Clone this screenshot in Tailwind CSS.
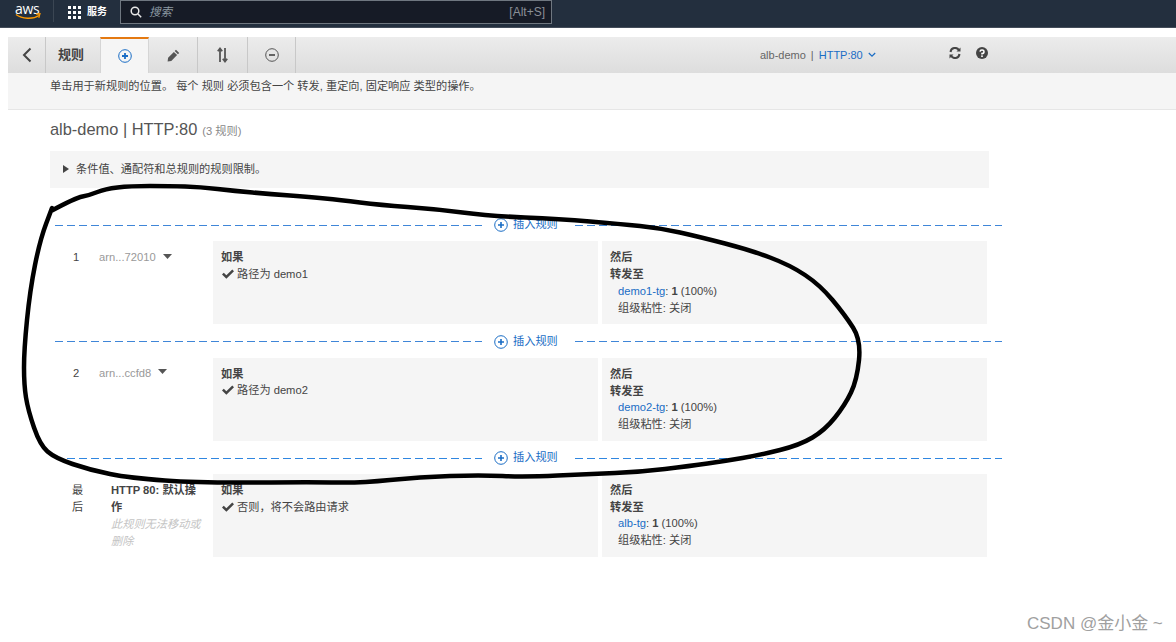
<!DOCTYPE html>
<html lang="en">
<head>
  <meta charset="UTF-8">
  <title>alb-demo 规则</title>
  <script src="https://cdn.jsdelivr.net/npm/@tailwindcss/browser@4"></script>
</head>
<body class="relative w-[1176px] h-[642px] overflow-hidden bg-white text-[#444] text-[11.2px] font-['Liberation_Sans','Noto_Sans_CJK_SC',sans-serif]">

  <!-- top nav -->
  <header class="h-[28px] bg-[#232f3e] border-b border-[#444d5a] flex items-start">
    <div class="w-[53px] h-[24px] pl-[15px] pt-px relative">
      <span class="block text-white text-[14px] leading-[15px] tracking-[-0.3px] font-['Open_Sans',sans-serif]">aws</span>
      <svg class="absolute left-[15px] top-[13px]" width="26" height="8" viewBox="0 0 26 8"><path d="M1 1.5C7 6 18 6.5 24 2.5" fill="none" stroke="#f90" stroke-width="1.5"/><path d="M21 1.2l4-.4-1.2 4" fill="none" stroke="#f90" stroke-width="1.2"/></svg>
    </div>
    <div class="w-px h-[22px] bg-[#3b4653]"></div>
    <svg class="ml-[14px] mt-[6px]" width="13" height="13" viewBox="0 0 13 13" fill="#fff">
      <rect x="0" y="0" width="3" height="3"/><rect x="5" y="0" width="3" height="3"/><rect x="10" y="0" width="3" height="3"/>
      <rect x="0" y="5" width="3" height="3"/><rect x="5" y="5" width="3" height="3"/><rect x="10" y="5" width="3" height="3"/>
      <rect x="0" y="10" width="3" height="3"/><rect x="5" y="10" width="3" height="3"/><rect x="10" y="10" width="3" height="3"/>
    </svg>
    <span class="ml-[6px] mt-[4px] w-[33px] text-white text-[10px] font-bold leading-[15px]">服务</span>
    <div class="w-[432px] h-[24px] bg-[#161b26] border border-[#6f7780] flex items-center pl-[9px] pr-[6px]">
      <svg width="12" height="12" viewBox="0 0 12 12" fill="none" stroke="#e8e8e8" stroke-width="1.5"><circle cx="5" cy="5" r="3.8"/><path d="M8 8l3.2 3.2"/></svg>
      <span class="ml-[7px] pt-px italic text-[11.5px] text-[#8d9aa3]">搜索</span>
      <span class="ml-auto text-[12px] text-[#8a8f96]">[Alt+S]</span>
    </div>
  </header>

  <!-- toolbar -->
  <div class="mt-[9px] ml-[8px] h-[36px] bg-gradient-to-b from-[#ececec] to-[#dddddd] flex items-stretch">
    <button class="w-[38px] flex items-center justify-center border-r border-[#c8c8c8]">
      <svg width="10" height="16" viewBox="0 0 10 16" fill="none" stroke="#444" stroke-width="2"><path d="M8.5 1.5L2 8l6.5 6.5"/></svg>
    </button>
    <div class="w-[54px] flex items-center pl-[12px] text-[13px] font-bold text-[#444]">规则</div>
    <button class="w-[49px] flex items-center justify-center bg-[#f5f5f5] border-t-2 border-[#e47911] border-x border-x-[#d5d5d5]">
      <svg width="14" height="14" viewBox="0 0 14 14" fill="none" stroke="#1a6dc5"><circle cx="7" cy="7" r="6.3"/><path d="M7 4v6M4 7h6" stroke-width="1.8"/></svg>
    </button>
    <button class="w-[49px] flex items-center justify-center border-r border-[#c8c8c8]">
      <svg width="13" height="13" viewBox="0 0 13 13" fill="#555"><path d="M9 .8l3.2 3.2-1.3 1.3-3.2-3.2zM6.9 2.9l3.2 3.2-5.8 5.8L.6 12.4l.5-3.7z"/></svg>
    </button>
    <button class="w-[50px] flex items-center justify-center border-r border-[#c8c8c8]">
      <svg width="11" height="16" viewBox="0 0 11 16" fill="none" stroke="#555" stroke-width="1.8"><path d="M3 15V2M.8 4.2L3 1.5l2.2 2.7M8 1v13M5.8 11.8L8 14.5l2.2-2.7"/></svg>
    </button>
    <button class="w-[48px] flex items-center justify-center border-r border-[#c8c8c8]">
      <svg width="14" height="14" viewBox="0 0 14 14" fill="none" stroke="#555"><circle cx="7" cy="7" r="6.3"/><path d="M4 7h6" stroke-width="1.8"/></svg>
    </button>
    <div class="ml-[464px] w-[121px] flex items-center text-[11px]">
      <span class="text-[#666]">alb-demo</span>
      <span class="mx-[5px] text-[#666]">|</span>
      <span class="text-[#1a6dc5]">HTTP:80</span>
      <svg class="ml-[5px]" width="8" height="6" viewBox="0 0 8 6" fill="none" stroke="#1a6dc5" stroke-width="1.2"><path d="M.8 1L4 4.2 7.2 1"/></svg>
    </div>
    <svg class="ml-[68px] mt-[10px]" width="12" height="12" viewBox="0 0 12 12" fill="none" stroke="#444" stroke-width="2"><path d="M1.5 5A4.6 4.6 0 0 1 10 3.2M10.5 7A4.6 4.6 0 0 1 2 8.8"/><path d="M11.5.6v4H7.5zM.5 11.4v-4h4z" fill="#444" stroke="none"/></svg>
    <svg class="ml-[15px] mt-[10px]" width="12" height="12" viewBox="0 0 12 12"><circle cx="6" cy="6" r="6" fill="#444"/><path d="M4 4.6A2 1.8 0 1 1 6 6.6V7.4" fill="none" stroke="#fff" stroke-width="1.5"/><rect x="5.2" y="8.4" width="1.6" height="1.6" fill="#fff"/></svg>
  </div>

  <!-- notice -->
  <div class="ml-[8px] h-[37px] bg-[#f5f5f5] border-b border-[#e6e6e6] pl-[42px] pt-[5px] leading-[16px] text-[#444]">单击用于新规则的位置。 每个 规则 必须包含一个 转发, 重定向, 固定响应 类型的操作。</div>

  <main class="pl-[50px]">
    <div class="mt-[8px] h-[22px] flex items-baseline">
      <h1 class="text-[16.4px] leading-[22px] text-[#555]">alb-demo | HTTP:80</h1>
      <span class="ml-[5px] text-[#888]">(3 规则)</span>
    </div>

    <div class="mt-[11px] w-[939px] h-[37px] bg-[#f5f5f5] flex items-center pl-[13px] pb-px">
      <svg width="6" height="8" viewBox="0 0 6 8" fill="#444"><path d="M0 0l6 4-6 4z"/></svg>
      <span class="ml-[7px]">条件值、通配符和总规则的规则限制。</span>
    </div>

    <!-- insert 1 -->
    <div class="mt-[20px] ml-[5px] w-[947px] h-[33px] pt-[2px] flex items-center whitespace-nowrap">
      <svg class="shrink-0" width="427" height="1" shape-rendering="crispEdges"><path d="M0 .5H427" stroke="#3f86d8" stroke-dasharray="8 4"/></svg>
      <svg class="ml-[12px] mb-[2px] shrink-0" width="14" height="14" viewBox="0 0 14 14" fill="none" stroke="#1a6dc5"><circle cx="7" cy="7" r="6.3"/><path d="M7 4v6M4 7h6" stroke-width="1.6"/></svg>
      <span class="ml-[5px] mb-[2px] text-[#1a6dc5]">插入规则</span>
      <svg class="ml-[17px] shrink-0" width="427" height="1" shape-rendering="crispEdges"><path d="M0 .5H427" stroke="#3f86d8" stroke-dasharray="8 4"/></svg>
    </div>

    <div class="flex h-[83px]">
      <div class="w-[49px] pl-[23px] pt-[8px] leading-[16px]">1</div>
      <div class="w-[114px] pt-[8px] leading-[16px] text-[#999] flex items-start">arn...72010<svg class="ml-[7px] mt-[5px]" width="9" height="5" viewBox="0 0 9 5" fill="#555"><path d="M0 0h9L4.5 5z"/></svg></div>
      <div class="w-[385px] bg-[#f5f5f5] pl-[8px] pt-[8px] leading-[17px]">
        <div class="font-bold">如果</div>
        <div class="flex items-center pl-px"><svg class="mr-[3px]" width="12" height="11" viewBox="0 0 11 10" fill="#444"><path d="M0 5l1.6-1.6L4 5.8 9.4.4 11 2 4 9z"/></svg>路径为 demo1</div>
      </div>
      <div class="ml-[4px] w-[385px] bg-[#f5f5f5] pl-[8px] pt-[8px] leading-[17px]">
        <div class="font-bold">然后</div>
        <div class="font-bold">转发至</div>
        <div class="pl-[8px]"><span class="text-[#1a6dc5]">demo1-tg</span>: <b>1</b> (100%)</div>
        <div class="pl-[8px]">组级粘性: 关闭</div>
      </div>
    </div>

    <!-- insert 2 -->
    <div class="ml-[5px] w-[947px] h-[34px] pt-px flex items-center whitespace-nowrap">
      <svg class="shrink-0" width="427" height="1" shape-rendering="crispEdges"><path d="M0 .5H427" stroke="#3f86d8" stroke-dasharray="8 4"/></svg>
      <svg class="ml-[12px] shrink-0" width="14" height="14" viewBox="0 0 14 14" fill="none" stroke="#1a6dc5"><circle cx="7" cy="7" r="6.3"/><path d="M7 4v6M4 7h6" stroke-width="1.6"/></svg>
      <span class="ml-[5px] text-[#1a6dc5]">插入规则</span>
      <svg class="ml-[17px] shrink-0" width="427" height="1" shape-rendering="crispEdges"><path d="M0 .5H427" stroke="#3f86d8" stroke-dasharray="8 4"/></svg>
    </div>

    <div class="flex h-[83px]">
      <div class="w-[49px] pl-[23px] pt-[7px] leading-[16px]">2</div>
      <div class="w-[114px] pt-[7px] leading-[16px] text-[#999] flex items-start">arn...ccfd8<svg class="ml-[7px] mt-[4px]" width="9" height="5" viewBox="0 0 9 5" fill="#555"><path d="M0 0h9L4.5 5z"/></svg></div>
      <div class="w-[385px] bg-[#f5f5f5] pl-[8px] pt-[8px] leading-[16px]">
        <div class="font-bold">如果</div>
        <div class="flex items-center pl-px"><svg class="mr-[3px]" width="12" height="11" viewBox="0 0 11 10" fill="#444"><path d="M0 5l1.6-1.6L4 5.8 9.4.4 11 2 4 9z"/></svg>路径为 demo2</div>
      </div>
      <div class="ml-[4px] w-[385px] bg-[#f5f5f5] pl-[8px] pt-[8px] leading-[16.5px]">
        <div class="font-bold">然后</div>
        <div class="font-bold">转发至</div>
        <div class="pl-[8px]"><span class="text-[#1a6dc5]">demo2-tg</span>: <b>1</b> (100%)</div>
        <div class="pl-[8px]">组级粘性: 关闭</div>
      </div>
    </div>

    <!-- insert 3 -->
    <div class="ml-[5px] w-[947px] h-[33px] pt-[2px] flex items-center whitespace-nowrap">
      <svg class="shrink-0" width="427" height="1" shape-rendering="crispEdges"><path d="M0 .5H427" stroke="#2f86e0" stroke-dasharray="8 4"/></svg>
      <svg class="ml-[12px] mb-[2px] shrink-0" width="14" height="14" viewBox="0 0 14 14" fill="none" stroke="#1a6dc5"><circle cx="7" cy="7" r="6.3"/><path d="M7 4v6M4 7h6" stroke-width="1.6"/></svg>
      <span class="ml-[5px] mb-[2px] text-[#1a6dc5]">插入规则</span>
      <svg class="ml-[17px] shrink-0" width="427" height="1" shape-rendering="crispEdges"><path d="M0 .5H427" stroke="#2f86e0" stroke-dasharray="8 4"/></svg>
    </div>

    <div class="flex h-[83px]">
      <div class="w-[61px] pl-[22px] pr-[25px] pt-[8px] leading-[17px]">最后</div>
      <div class="w-[102px] pr-[10px] pt-[8px] leading-[17px]">
        <div class="font-bold">HTTP 80: 默认操作</div>
        <div class="italic text-[#c4c4c4]">此规则无法移动或删除</div>
      </div>
      <div class="w-[385px] bg-[#f5f5f5] pl-[8px] pt-[8px] leading-[17px]">
        <div class="font-bold">如果</div>
        <div class="flex items-center pl-px"><svg class="mr-[3px]" width="12" height="11" viewBox="0 0 11 10" fill="#444"><path d="M0 5l1.6-1.6L4 5.8 9.4.4 11 2 4 9z"/></svg>否则，将不会路由请求</div>
      </div>
      <div class="ml-[4px] w-[385px] bg-[#f5f5f5] pl-[8px] pt-[8px] leading-[16.5px]">
        <div class="font-bold">然后</div>
        <div class="font-bold">转发至</div>
        <div class="pl-[8px]"><span class="text-[#1a6dc5]">alb-tg</span>: <b>1</b> (100%)</div>
        <div class="pl-[8px]">组级粘性: 关闭</div>
      </div>
    </div>
  </main>

  <!-- hand drawn circle on top of the screenshot -->
  <svg class="absolute left-0 top-0 pointer-events-none" width="1176" height="642" viewBox="0 0 1176 642" fill="none">
    <path id="loop" stroke="#000" stroke-width="4.5" stroke-linejoin="round" stroke-linecap="round"/>
  </svg>

  <div class="absolute left-[1027px] top-[614px] text-[17px] leading-[20px] text-[#a0a0a0]">CSDN @金小金 ~</div>

  <script>
    // smooth the pen stroke through the points (midpoint quadratics)
    const pts = [[51,211],[75,198],[90,195],[105,189],[130,186],[170,186],[200,187],[235,191],[270,194],[310,197],[340,200],[380,205],[435,209],[490,216],[560,219],[620,224],[660,228],[700,237],[750,250],[790,265],[820,285],[845,315],[861,340],[857,380],[845,405],[825,430],[800,445],[760,455],[725,461],[690,466],[640,472],[590,474],[525,477],[480,475],[420,477],[360,483],[315,482],[200,483],[130,478],[90,470],[55,458],[40,445],[28,410],[24,385],[24,350],[30,290],[40,240],[52,208]];
    let d = `M${pts[0][0]} ${pts[0][1]}`;
    for (let i = 1; i < pts.length - 1; i++) {
      const mx = (pts[i][0] + pts[i+1][0]) / 2, my = (pts[i][1] + pts[i+1][1]) / 2;
      d += `Q${pts[i][0]} ${pts[i][1]} ${mx} ${my}`;
    }
    d += `L${pts[pts.length-1][0]} ${pts[pts.length-1][1]}`;
    document.getElementById('loop').setAttribute('d', d);
  </script>
</body>
</html>
